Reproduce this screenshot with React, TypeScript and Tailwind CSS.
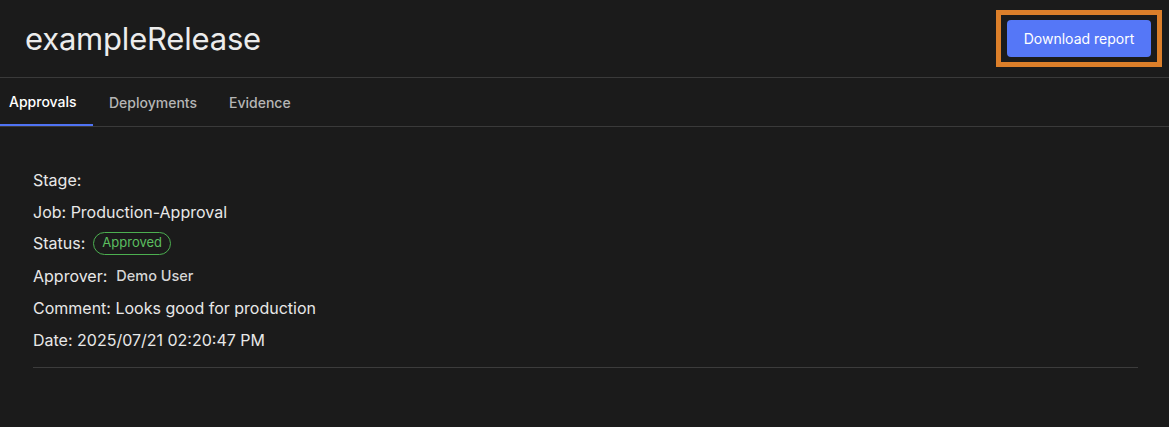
import React from "react";

export default function App() {
  const font = { fontFamily: "Inter, 'Noto Sans', sans-serif" };
  return (
    <div className="w-[1169px] h-[427px] bg-[#1b1b1b] text-[#e6e6e6] overflow-hidden" style={font}>
      <div className="h-[78px] flex items-center justify-between border-b border-[#3a3a3a]">
        <h1 className="ml-[25px] text-[31px] leading-none font-normal text-[#ececec] tracking-[-0.2px]">exampleRelease</h1>
        <div className="mr-[7px] mb-[1px] border-[5px] border-[#dc7f2a] px-[6px] py-[5px]">
          <button className="w-[144px] h-[37px] rounded-[4px] bg-[#5577f7] text-white text-[14px] flex items-center justify-center">
            Download report
          </button>
        </div>
      </div>
      <div className="flex h-[49px] border-b border-[#3a3a3a] text-[14px]">
        <div className="w-[93px] pl-[9px] flex items-center border-b-[2px] border-[#4f73f4] text-white font-medium">Approvals</div>
        <div className="px-[16px] flex items-center text-[#b5b5b5] font-medium">Deployments</div>
        <div className="px-[16px] flex items-center text-[#b5b5b5] font-medium">Evidence</div>
      </div>
      <div className="px-[33px] pt-[37px] w-[1138px]">
        <div className="flex flex-col text-[16px] text-[#e8e8e8]">
          <div className="h-[32px] flex items-center">Stage:</div>
          <div className="h-[31px] flex items-center">Job: Production-Approval</div>
          <div className="h-[32px] flex items-center gap-[8px]">
            <span>Status:</span>
            <span className="rounded-full border border-[#4caf50] text-[#5cbf60] text-[13px] px-[8px] h-[23px] flex items-center">Approved</span>
          </div>
          <div className="h-[33px] flex items-center gap-[9px]">
            <span>Approver:</span>
            <span className="text-[14.5px] text-[#d6d6d6] font-medium">Demo User</span>
          </div>
          <div className="h-[32px] flex items-center">Comment: Looks good for production</div>
          <div className="h-[32px] flex items-center">Date: 2025/07/21 02:20:47 PM</div>
        </div>
        <div className="mt-[11px] h-px w-[1105px] bg-[#3c3c3c]"></div>
      </div>
    </div>
  );
}
